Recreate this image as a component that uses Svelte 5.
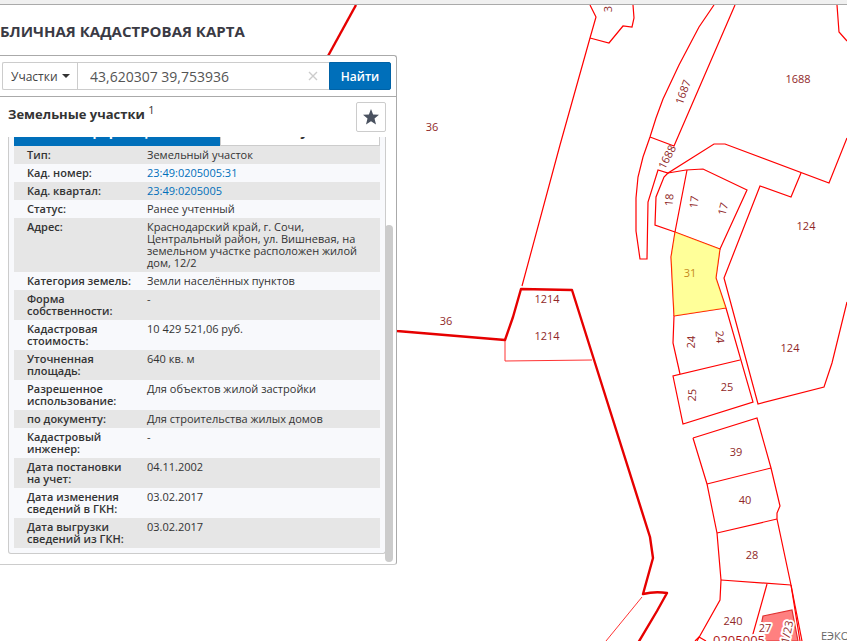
<script lang="ts">
  interface Row {
    label: string;
    value: string;
    link?: boolean;
  }

  interface MapLabel {
    text: string;
    x: number;
    y: number;
    rotate?: number;
  }

  const rows: Row[] = [
    { label: 'Тип:', value: 'Земельный участок' },
    { label: 'Кад. номер:', value: '23:49:0205005:31', link: true },
    { label: 'Кад. квартал:', value: '23:49:0205005', link: true },
    { label: 'Статус:', value: 'Ранее учтенный' },
    {
      label: 'Адрес:',
      value: 'Краснодарский край, г. Сочи, Центральный район, ул. Вишневая, на земельном участке расположен жилой дом, 12/2'
    },
    { label: 'Категория земель:', value: 'Земли населённых пунктов' },
    { label: 'Форма собственности:', value: '-' },
    { label: 'Кадастровая стоимость:', value: '10 429 521,06 руб.' },
    { label: 'Уточненная площадь:', value: '640 кв. м' },
    { label: 'Разрешенное использование:', value: 'Для объектов жилой застройки' },
    { label: 'по документу:', value: 'Для строительства жилых домов' },
    { label: 'Кадастровый инженер:', value: '-' },
    { label: 'Дата постановки на учет:', value: '04.11.2002' },
    { label: 'Дата изменения сведений в ГКН:', value: '03.02.2017' },
    { label: 'Дата выгрузки сведений из ГКН:', value: '03.02.2017' }
  ];

  // parcel borders
  const parcels = [
    'M590 5 L596 17 L590 38 L560 145 L522 286',
    'M590 38 L609 43 L623 26 L632 27 L634 18 L633 5',
    'M714 5 L699 27 L679 65 L663 99 L656 118 L650 137 L643 157 L638 177 L636 198 L636 231 L640 259 L647 259 L648 202 L658 170 L668 173 L714 144 L725 144 L829 183 L847 138',
    'M735 5 L674 146 L650 137',
    'M837 5 L839 32 L847 41',
    'M668 173 L664 177 L656 197 L655 225 L675 232 L720 249 L747 190 L703 169 L686 170 L668 173',
    'M687 170 L675 232 L671 257 L674 316',
    'M801 173 L791 197 L760 186 L724 278 L758 404 L824 387 L832 363 L847 302',
    'M720 249 L716 278 L726 308 L753 402 L683 424 L673 376 L740 360',
    'M726 308 L674 316 L673 343 L680 374',
    'M693 438 L757 418 L771 468 L780 506 L777 513 L777 519 L791 585 L800 641',
    'M693 438 L707 484 L717 533 L721 580 L720 600 L697 641',
    'M707 484 L771 468',
    'M717 533 L777 519',
    'M721 580 L791 585',
    'M767 584 L751 641',
    'M791 585 L802 641',
    'M695 641 L699 637 L706 641'
  ];

  const labels: MapLabel[] = [
    { text: '36', x: 432, y: 127 },
    { text: '36', x: 446, y: 321 },
    { text: '1214', x: 547, y: 299 },
    { text: '1214', x: 547, y: 336 },
    { text: '3', x: 608, y: 9, rotate: -90 },
    { text: '1687', x: 683, y: 92, rotate: -70 },
    { text: '1688', x: 667, y: 157, rotate: -62 },
    { text: '1688', x: 798, y: 79 },
    { text: '18', x: 669, y: 200, rotate: -85 },
    { text: '17', x: 694, y: 202, rotate: -84 },
    { text: '17', x: 723, y: 209, rotate: -75 },
    { text: '124', x: 806, y: 226 },
    { text: '124', x: 790, y: 348 },
    { text: '24', x: 691, y: 342, rotate: -88 },
    { text: '24', x: 720, y: 337, rotate: 85 },
    { text: '25', x: 692, y: 395, rotate: -88 },
    { text: '25', x: 727, y: 387 },
    { text: '39', x: 736, y: 452 },
    { text: '40', x: 745, y: 500 },
    { text: '28', x: 752, y: 555 },
    { text: '240', x: 733, y: 621 }
  ];

  const haloLabels: MapLabel[] = [
    { text: '27', x: 765, y: 628 },
    { text: '1/23', x: 787, y: 632, rotate: -78 }
  ];

  let layer = $state('parcels');
  let query = $state('43,620307 39,753936');
</script>

{#snippet mapText(item: MapLabel)}
  <text transform="translate({item.x} {item.y}) rotate({item.rotate ?? 0})" dy="4">{item.text}</text>
{/snippet}

<div class="page">
  <div class="top-strip"></div>

  <main>
    <svg class="map" aria-label="Карта участков">
      <g transform="translate(0 -5)">
        <g class="borders">
          {#each parcels as d}
            <path {d} />
          {/each}
        </g>
        <path class="thin" d="M505 340 L505 361 L592 360" />
        <path class="thin" d="M642 597 L606 641" />
        <path class="quarter" d="M356 5 L328 56" />
        <path
          class="quarter"
          d="M390 330 L397 331 L505 340 L513 317 L521 289 L572 290 L607 401 L650 537 L653 558 L643 594 Q655 591 667 593 L657 611 L638 643"
        />
        <path class="building" d="M763 616 L792 610 L798 641 L758 641 Z" />
        <g class="labels">
          {#each labels as item}
            {@render mapText(item)}
          {/each}
        </g>
        <g class="labels halo">
          {#each haloLabels as item}
            {@render mapText(item)}
          {/each}
        </g>
        <text class="quarter-label" x="739" y="645">0205005</text>
        <path class="selected" d="M675 232 L720 249 L716 278 L726 308 L674 316 L671 257 Z" />
        <text class="selected-label" x="690" y="277">31</text>
        <text class="credits" x="821" y="640">ЕЭКО</text>
      </g>
    </svg>

    <div class="overlay">
      <h1>БЛИЧНАЯ КАДАСТРОВАЯ КАРТА</h1>

      <section class="panel">
        <form class="search" onsubmit={(e) => e.preventDefault()}>
          <div class="select-wrap">
            <select bind:value={layer} aria-label="Тип объекта">
              <option value="parcels">Участки</option>
            </select>
            <svg class="caret" width="8" height="4" viewBox="0 0 8 4"><path d="M0 0 H8 L4 4 Z" /></svg>
          </div>
          <input type="text" bind:value={query} aria-label="Поиск" />
          <button class="clear" type="button" aria-label="Очистить" onclick={() => (query = '')}>
            <svg width="10" height="10" viewBox="0 0 10 10"><path d="M1 1 L9 9 M9 1 L1 9" /></svg>
          </button>
          <button class="find" type="submit">Найти</button>
        </form>

        <header>
          <h2>Земельные участки <sup>1</sup></h2>
          <button class="star" type="button" aria-label="В избранное">
            <svg width="16" height="16" viewBox="0 0 16 16">
              <path d="M8 0 L10.1 5.4 L16 5.8 L11.5 9.6 L13 15.5 L8 12.3 L3 15.5 L4.5 9.6 L0 5.8 L5.9 5.4 Z" />
            </svg>
          </button>
        </header>

        <div class="content">
          <div class="card">
            <div class="tabs">
              <button class="tab active" type="button">Информация</button>
              <button class="tab" type="button">Услуги</button>
            </div>
            <table>
              <tbody>
                {#each rows as row}
                  <tr>
                    <th scope="row">{row.label}</th>
                    <td>
                      {#if row.link}
                        <a href="#{row.value}">{row.value}</a>
                      {:else}
                        {row.value}
                      {/if}
                    </td>
                  </tr>
                {/each}
              </tbody>
            </table>
          </div>
          <div class="scroll-thumb"></div>
        </div>
      </section>
    </div>
  </main>
</div>

<style>
  :global(body) {
    background: #fff;
  }

  .page {
    display: flex;
    flex-direction: column;
    height: 100vh;
    overflow: hidden;
    font-family: 'Open Sans', 'Noto Sans', sans-serif;
    color: #333;
  }

  .page * {
    box-sizing: border-box;
  }

  .top-strip {
    flex: none;
    height: 5px;
    background: #f0f0f0;
    border-bottom: 1px solid #aaa;
  }

  main {
    position: relative;
    flex: 1;
    min-height: 0;
  }

  /* Map */
  .map {
    position: absolute;
    inset: 0;
    width: 100%;
    height: 100%;
  }

  .map path {
    fill: none;
    stroke: #ff0000;
    stroke-width: 1.2;
  }

  .map .thin {
    stroke: #f33;
    stroke-width: 1;
  }

  .map .quarter {
    stroke: #e60000;
    stroke-width: 2.4;
    stroke-linejoin: round;
  }

  .map .building {
    fill: #ff8080;
    stroke: #e03030;
  }

  .map .selected {
    fill: #ffff0066;
    stroke: none;
  }

  .labels text,
  .selected-label {
    fill: #902828;
    font-size: 11px;
    text-anchor: middle;
  }

  .selected-label {
    fill: #c58a20;
  }

  .halo text,
  .quarter-label {
    stroke: #fff;
    stroke-width: 4px;
    stroke-linejoin: round;
    paint-order: stroke;
  }

  .quarter-label {
    fill: #b01818;
    font-size: 13px;
    text-anchor: middle;
  }

  .credits {
    fill: #666;
    font-size: 11px;
  }

  /* Panel */
  .overlay {
    position: relative;
    width: 397px;
    max-width: 100%;
  }

  h1 {
    margin: 0;
    padding: 16px 0 14px;
    font-size: 15px;
    line-height: 20px;
    font-weight: 700;
    color: #3a3a44;
    white-space: nowrap;
  }

  .panel {
    background: #fff;
    border: 1px solid #aaa;
    border-left: 0;
    border-bottom-color: #ccc;
    border-radius: 0 3px 3px 0;
  }

  .search {
    display: flex;
    height: 41px;
    padding: 6px 5px 6px 2px;
    border-bottom: 1px solid #aaa;
  }

  .select-wrap {
    display: flex;
    align-items: center;
    width: 75px;
    padding-right: 7px;
    border: 1px solid #ccc;
    border-right: 0;
    border-radius: 2px 0 0 2px;
  }

  select {
    flex: 1;
    min-width: 0;
    padding: 0 0 0 8px;
    border: 0;
    background: none;
    appearance: none;
    font: 12px 'Open Sans', sans-serif;
    color: #444;
  }

  .caret {
    flex: none;
    fill: #333;
  }

  input {
    flex: 1;
    min-width: 0;
    padding: 0 12px;
    border: 1px solid #ccc;
    border-right: 0;
    font: 14px 'Open Sans', sans-serif;
    color: #555;
    outline: none;
  }

  .clear {
    display: flex;
    align-items: center;
    padding: 0 11px;
    border: 1px solid #ccc;
    border-width: 1px 0;
    background: none;
  }

  .clear svg {
    stroke: #ccc;
    stroke-width: 1.4;
  }

  .find {
    width: 62px;
    padding: 0;
    border: 1px solid #0062a6;
    border-radius: 0 2px 2px 0;
    background: #006fba;
    color: #fff;
    font: 600 12px 'Open Sans', sans-serif;
  }

  header {
    display: flex;
    justify-content: space-between;
    padding: 5px 10px 5px 8px;
  }

  h2 {
    margin: 0;
    font-size: 13px;
    line-height: 24px;
    font-weight: 700;
  }

  sup {
    font-size: 11px;
    line-height: 0;
    font-weight: 400;
  }

  .star {
    display: grid;
    place-items: center;
    width: 30px;
    height: 30px;
    padding: 0;
    border: 1px solid #ccc;
    border-radius: 2px;
    background: #fff;
  }

  .star svg {
    fill: #4a5260;
  }

  .content {
    position: relative;
    padding: 0 10px 10px 8px;
  }

  .card {
    padding: 0 5px 5px;
    border: 1px solid #ccc;
    border-top: 0;
    border-radius: 0 0 3px 3px;
    background: #f8f9fc;
  }

  .tabs {
    display: flex;
    align-items: flex-end;
    height: 9px;
    overflow: hidden;
  }

  .tab {
    flex: 160;
    padding: 0 0 3px;
    border: 1px solid #ccc;
    background: #fff;
    color: #333;
    font: 700 14px/19px 'Open Sans', sans-serif;
  }

  .tab.active {
    flex: 206;
    border-color: #006fba;
    background: #006fba;
    color: #fff;
  }

  .tab {
    padding-bottom: 5px;
  }

  table {
    width: 100%;
    border-collapse: collapse;
    font-size: 11px;
    line-height: 12px;
  }

  tr:nth-child(odd) {
    background: #e6e6e6;
  }

  th,
  td {
    padding: 3px 0;
    text-align: left;
    vertical-align: top;
  }

  th {
    width: 133px;
    padding: 3px 13px;
    padding-right: 16px;
    font-weight: 600;
  }

  td {
    padding-right: 20px;
  }

  a {
    color: #006fba;
    text-decoration: none;
  }

  .scroll-thumb {
    position: absolute;
    right: 3px;
    bottom: 2px;
    width: 8px;
    height: 79%;
    border-radius: 4px;
    background: #ccc;
  }
</style>
